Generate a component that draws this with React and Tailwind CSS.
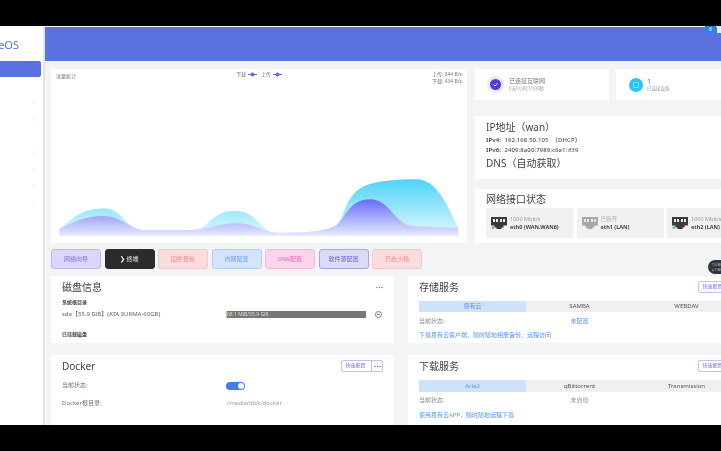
import React from "react";

const font = { fontFamily: '"Noto Sans","Noto Sans CJK SC",sans-serif' };

const blueD = "M28 178C60 150 95 115 160 115C205 115 215 150 250 170C265 179 275 181 300 181C380 181 420 182 450 176C475 165 495 122 555 122C610 122 630 170 660 185C670 188 680 188 700 188C760 188 830 185 860 165C885 140 885 70 950 45C990 32 1040 28 1100 28C1160 28 1195 110 1225 175L1225 197L28 197Z";
const purpleD = "M28 178C70 155 110 138 160 138C205 138 230 165 250 172C265 180 275 181 300 181C360 181 420 182 450 178C490 172 520 160 555 160C600 160 635 178 660 185C670 188 680 188 700 188C760 188 830 185 860 165C885 145 900 88 960 88C1015 88 1030 150 1075 166C1110 172 1170 172 1225 173L1225 197L28 197Z";

function Chart() {
  return (
    <svg width="416" height="74" viewBox="3 -3 1248 222" className="block mt-auto">
      <defs>
        <linearGradient id="gb" gradientUnits="userSpaceOnUse" x1="0" y1="28" x2="0" y2="197">
          <stop offset="0" stopColor="#4fd3f8" />
          <stop offset="1" stopColor="#e0f8ff" />
        </linearGradient>
        <linearGradient id="gp" gradientUnits="userSpaceOnUse" x1="0" y1="85" x2="0" y2="197">
          <stop offset="0" stopColor="#6468f8" />
          <stop offset="1" stopColor="#e6e9ff" />
        </linearGradient>
      </defs>
      <path d={blueD} fill="url(#gb)" />
      <path d={purpleD} fill="url(#gp)" />
    </svg>
  );
}

function Dots({ c }) {
  return (
    <svg width="7" height="3" viewBox="0 0 7 3"><circle cx="1" cy="1.5" r=".7" fill={c} /><circle cx="3.5" cy="1.5" r=".7" fill={c} /><circle cx="6" cy="1.5" r=".7" fill={c} /></svg>
  );
}

function Legend({ label }) {
  return (
    <span className="flex items-center gap-[2px]">
      <span>{label}</span>
      <svg width="9" height="5" viewBox="0 0 9 5"><path d="M0 2.5H9" stroke="#5f6fc8" strokeWidth="1" /><circle cx="4.5" cy="2.5" r="2" fill="#5f6fc8" /></svg>
    </span>
  );
}

function Port({ active, speed, name, muted }) {
  const c = active ? "#3a3a3a" : "#a8a8a8";
  return (
    <div className="w-[87px] h-[30px] shrink-0 bg-[#f1f1f1] flex items-center pl-[5px] gap-[3px]">
      <svg width="16" height="15" viewBox="0 0 16 15" className="shrink-0">
        <path d="M0 1H16V9.5H12.5V11.5H10.5V13H5.5V11.5H3.5V9.5H0Z" fill={c} />
        <path d="M2 3h2v3H2zM5 3h2v3H5zM9 3h2v3H9zM12 3h2v3h-2z" fill="#e8e8e8" />
        {active && <circle cx="2" cy="11.5" r="1.5" fill="#5fd35f" />}
      </svg>
      <div className="leading-[8px] whitespace-nowrap">
        <div className={`text-[5.5px] ${muted ? "text-[#b0b0b0]" : "text-[#9a9a9a]"}`}>{speed}</div>
        <div className="text-[5.5px] font-bold text-[#444]">{name}</div>
      </div>
    </div>
  );
}

function Btn({ children, cls }) {
  return (
    <div className={`w-[50px] h-[20px] rounded-[3px] border flex items-center justify-center text-[6px] whitespace-nowrap ${cls}`}>{children}</div>
  );
}

function Quick() {
  return (
    <div className="flex h-[12px] border border-[#c9bdf4] rounded-[2px] text-[5px] text-[#6d6fd8] items-center bg-white">
      <span className="pl-[3.5px] w-[29px] whitespace-nowrap">快速配置</span>
      <span className="border-l border-[#c9bdf4] h-full w-[11px] flex items-center justify-center"><Dots c="#5558a8" /></span>
    </div>
  );
}

function Tabs({ items, tall }) {
  return (
    <div className={`grid grid-cols-3 ${tall ? "h-[12px]" : "h-[11px]"} bg-[#f0f0f0] text-[6px] items-center text-center text-[#555] mt-[7px]`}>
      {items.map((t, i) => (
        <div key={t} className={i === 0 ? "bg-[#cfe2fb] text-[#5b93e8] h-full flex items-center justify-center" : ""}>{t}</div>
      ))}
    </div>
  );
}

function Service({ title, tabs, state, stateCls, link, tall }) {
  return (
    <div className={`w-[343px] bg-white px-[11px] ${tall ? "h-[70px]" : "h-[67px]"} pt-[4px]`}>
      <div className="flex items-center justify-between h-[14px]">
        <span className="text-[10px] text-[#444]">{title}</span>
        <Quick />
      </div>
      <Tabs items={tabs} tall={tall} />
      <div className={`grid grid-cols-3 text-[6px] text-[#8a8a8a] ${tall ? "mt-[4px]" : "mt-[5px]"} leading-[9px]`}>
        <span>当前状态:</span>
        <span className={`text-center ${stateCls}`}>{state}</span>
      </div>
      <div className={`text-[6px] text-[#5b93e8] ${tall ? "mt-[6px]" : "mt-[5px]"} leading-[9px]`}>{link}</div>
    </div>
  );
}

export default function App() {
  return (
    <div className="relative w-[721px] h-[451px] overflow-hidden bg-black" style={font}>
      <div className="h-[26px] bg-black" />
      <div className="h-[399px] flex overflow-hidden bg-[#f3f4f6] border-t border-white blur-[0.4px]">
        <aside className="w-[45px] shrink-0 bg-white border-r-2 border-[#e4e4e4] flex flex-col overflow-hidden">
          <div className="h-[34px] flex items-center justify-end pr-[24px] text-[11px] text-[#5a72e0] whitespace-nowrap leading-none">iStoreOS</div>
          <div className="w-[41px] h-[16px] bg-[#5a72e0] rounded-r-[2px] shrink-0" />
          <div className="flex flex-col items-end pr-[8px] mt-[17px] text-[#cfcfcf] text-[6px] leading-[16.5px]">
            <span>›</span><span>›</span><span className="mt-[17px]">›</span><span>›</span><span>›</span><span>›</span>
          </div>
        </aside>
        <main className="flex-1 min-w-0 flex flex-col">
          <header className="h-[34px] shrink-0 bg-[#5a72e0]" />
          <div className="w-[706px] pl-[6px] pt-[8px] flex flex-col">
            <div className="flex gap-[8px]">
              <section className="w-[416px] h-[174px] bg-white flex flex-col shrink-0">
                <div className="relative flex justify-between px-[5px] pt-[2px] text-[5px] text-[#777] leading-[7px]">
                  <span className="pt-[2px]">流量统计</span>
                  <div className="flex gap-[4px] absolute left-[185px] top-[2px]"><Legend label="下载" /><Legend label="上传" /></div>
                  <div className="text-right leading-[7px]">
                    <div>上传: 344 B/s</div>
                    <div>下载: 434 B/s</div>
                  </div>
                </div>
                <Chart />
              </section>
              <div className="flex flex-col w-[276px] shrink-0">
                <div className="flex gap-[7px]">
                  <div className="w-[134px] h-[31px] bg-white flex items-center pl-[12px] gap-[5px]">
                    <div className="w-[17px] h-[17px] rounded-full bg-[#ece9fd] flex items-center justify-center">
                      <div className="w-[11px] h-[11px] rounded-full bg-[#5538e0] flex items-center justify-center">
                        <svg width="7" height="7" viewBox="0 0 7 7"><path d="M1.5 3.6L3 5L5.5 2.2" stroke="#fff" strokeWidth="1" fill="none" /></svg>
                      </div>
                    </div>
                    <div className="leading-[7px] whitespace-nowrap">
                      <div className="text-[6px] text-[#777]">已连接互联网</div>
                      <div className="text-[4.5px] text-[#999]">0天0小时11分0秒</div>
                    </div>
                  </div>
                  <div className="w-[134px] h-[31px] bg-white flex items-center pl-[13px] gap-[4px]">
                    <div className="w-[14px] h-[14px] rounded-full bg-[#28c4f2] flex items-center justify-center">
                      <div className="w-[6px] h-[6px] rounded-[1px] border border-[#7fe0fa]" />
                    </div>
                    <div className="leading-[7px] whitespace-nowrap">
                      <div className="text-[7px] text-[#777]">1</div>
                      <div className="text-[4.5px] text-[#999]">已连接设备</div>
                    </div>
                  </div>
                </div>
                <div className="h-[63px] bg-white mt-[16px] pl-[11px] pt-[4px] whitespace-nowrap">
                  <div className="text-[10px] text-[#444] leading-[15px]">IP地址（wan）</div>
                  <div className="text-[6px] text-[#555] leading-[10px] tracking-[0.1px] font-medium"><b>IPv4:</b>&nbsp; 192.168.50.105 &nbsp;（DHCP）</div>
                  <div className="text-[6px] text-[#555] leading-[10px] tracking-[0.1px] font-medium"><b>IPv6:</b>&nbsp; 2409:8a00:7989:c6a1::f39</div>
                  <div className="text-[10px] text-[#444] leading-[15px] mt-[1px]">DNS（自动获取）</div>
                </div>
                <div className="h-[54px] bg-white mt-[10px] pl-[11px] pt-[3px]">
                  <div className="text-[10px] text-[#444] leading-[15px]">网络接口状态</div>
                  <div className="flex gap-[3.5px] mt-[1px]">
                    <Port active speed="1000 Mbit/s" name="eth0 (WAN,WAN6)" />
                    <Port speed="已断开" name="eth1 (LAN)" muted />
                    <Port active speed="1000 Mbit/s" name="eth2 (LAN)" />
                  </div>
                </div>
              </div>
            </div>
            <div className="flex gap-[3.5px] mt-[6px]">
              <Btn cls="bg-[#dcd8fb] border-[#bdb5f2] text-[#8270ee]">网络向导</Btn>
              <Btn cls="bg-[#2b2b2b] border-[#2b2b2b] text-[#e8e8e8]"><b className="mr-[1px]">❯</b>终端</Btn>
              <Btn cls="bg-[#fbdddd] border-[#f3c7c7] text-[#f08a8a]">固件更新</Btn>
              <Btn cls="bg-[#d6e4fb] border-[#b7cdf2] text-[#6c9ff0]">内网配置</Btn>
              <Btn cls="bg-[#fbd4ec] border-[#f3bbdd] text-[#ee62b8]">DNS配置</Btn>
              <Btn cls="bg-[#dcdbf7] border-[#a9a3ee] text-[#6a57e0]">软件源配置</Btn>
              <Btn cls="bg-[#fbdddd] border-[#f3c7c7] text-[#f08a8a]">开启沙箱</Btn>
            </div>
            <div className="flex gap-[14px] mt-[7px]">
              <div className="flex flex-col gap-[12px]">
                <div className="w-[343px] h-[67px] bg-white pl-[11px] pr-[11px] pt-[4px]">
                  <div className="flex justify-between items-center h-[14px]">
                    <span className="text-[10px] text-[#444]">磁盘信息</span>
                    <Dots c="#777" />
                  </div>
                  <div className="text-[5px] font-bold text-[#444] mt-[5px] leading-[7px]">系统根目录</div>
                  <div className="flex items-center mt-[4px] h-[9px]">
                    <span className="text-[6px] text-[#666] w-[164px] whitespace-nowrap">sda【55.9 GiB】(ATA SURMA-60GB)</span>
                    <div className="w-[140px] h-[7px] bg-[#777] text-[5px] text-[#ddd] leading-[7px] whitespace-nowrap border-l border-[#a8e08a]">68.1 MiB/55.9 GiB</div>
                    <div className="ml-[9px] w-[7px] h-[7px] rounded-full border border-[#777] flex items-center justify-center">
                      <div className="w-[3px] h-px bg-[#777]" />
                    </div>
                  </div>
                  <div className="text-[5px] font-bold text-[#444] mt-[12px] leading-[7px]">已挂载磁盘</div>
                </div>
                <div className="w-[343px] h-[70px] bg-white pl-[11px] pr-[11px] pt-[4px]">
                  <div className="flex justify-between items-center h-[14px]">
                    <span className="text-[10px] text-[#444]">Docker</span>
                    <Quick />
                  </div>
                  <div className="flex items-center mt-[8px] h-[9px] text-[6px] text-[#777]">
                    <span className="w-[164px]">当前状态:</span>
                    <div className="w-[19px] h-[8px] rounded-full bg-[#3f7cf0] flex items-center justify-end pr-[1px]">
                      <div className="w-[6px] h-[6px] rounded-full bg-white" />
                    </div>
                  </div>
                  <div className="flex items-center mt-[9px] h-[9px] text-[6px] text-[#777]">
                    <span className="w-[165px]">Docker根目录:</span>
                    <span className="text-[#999]">/media/disk/docker</span>
                  </div>
                </div>
              </div>
              <div className="flex flex-col gap-[12px]">
                <Service title="存储服务" tabs={["易有云", "SAMBA", "WEBDAV"]} state="未配置" stateCls="text-[#5b93e8]" link="下载易有云客户端，随时随地相册备份、远程访问" />
                <Service tall title="下载服务" tabs={["Aria2", "qBittorrent", "Transmission"]} state="未启动" stateCls="text-[#999]" link="使用易有云APP，随时随地远程下载" />
              </div>
            </div>
          </div>
        </main>
      </div>
      <div className="h-[26px] bg-black" />
      <div className="absolute left-[708px] top-[260px] w-[24px] h-[14px] rounded-full bg-[#2f3640] text-[3.5px] text-[#ddd] leading-[5px] pt-[2px] pl-[3px]">
        <div>↑0 B/s</div><div>↓1 B/s</div>
      </div>
      <div className="absolute left-[705px] top-[26px] w-[11px] h-[7px] rounded-b-[2px] bg-[#2f80f0] text-white text-[5px] leading-[7px] text-center">6</div>
      <div className="absolute left-[717px] top-[26px] w-[4px] h-[7px] bg-[#e8eefc]" />
    </div>
  );
}
